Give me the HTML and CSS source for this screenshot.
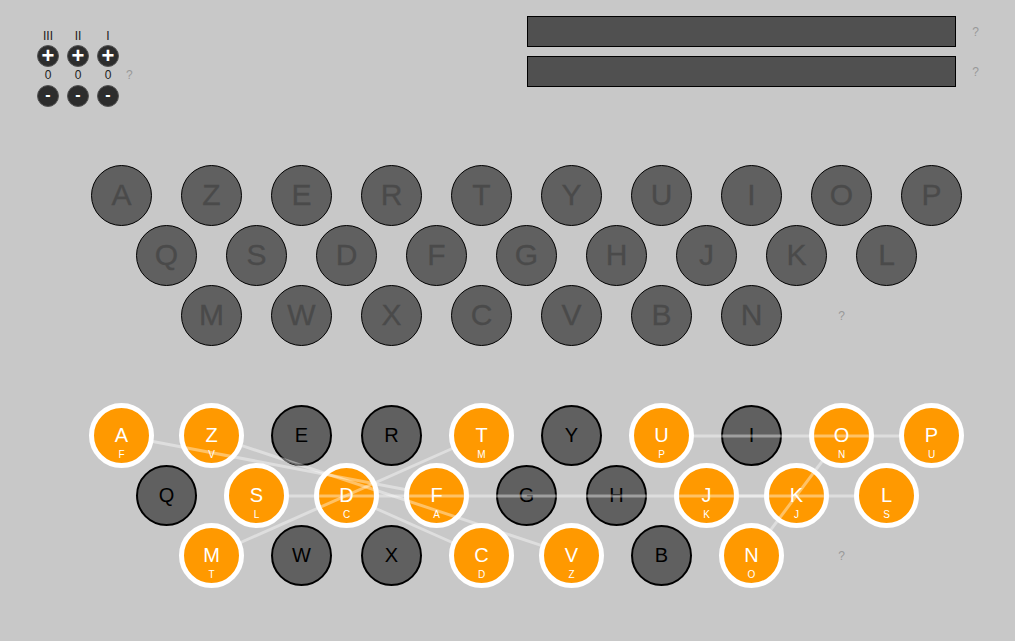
FILE: index.html
```html
<!DOCTYPE html>
<html lang="fr">
<head>
    <meta charset="UTF-8">
    <meta name="viewport" content="width=device-width, initial-scale=1.0">
    <title>Enigma</title>
    <link rel="stylesheet" href="styles.css">
</head>
<body>
    <div class="top">
        <div class="rotors">
            <div class="rotor">
                <span class="rotor-name">III</span>
                <button class="rotor-btn">+</button>
                <span class="rotor-pos">0</span>
                <button class="rotor-btn minus">-</button>
            </div>
            <div class="rotor">
                <span class="rotor-name">II</span>
                <button class="rotor-btn">+</button>
                <span class="rotor-pos">0</span>
                <button class="rotor-btn minus">-</button>
            </div>
            <div class="rotor">
                <span class="rotor-name">I</span>
                <button class="rotor-btn">+</button>
                <span class="rotor-pos">0</span>
                <button class="rotor-btn minus">-</button>
            </div>
            <span class="help rotors-help">?</span>
        </div>
        <div class="displays">
            <div class="display-row"><div class="display"></div><span class="help">?</span></div>
            <div class="display-row"><div class="display"></div><span class="help">?</span></div>
        </div>
    </div>

    <!-- Clavier -->
    <div class="board keyboard">
        <div class="row">
            <div class="key">A</div><div class="key">Z</div><div class="key">E</div><div class="key">R</div><div class="key">T</div><div class="key">Y</div><div class="key">U</div><div class="key">I</div><div class="key">O</div><div class="key">P</div>
        </div>
        <div class="row row-2">
            <div class="key">Q</div><div class="key">S</div><div class="key">D</div><div class="key">F</div><div class="key">G</div><div class="key">H</div><div class="key">J</div><div class="key">K</div><div class="key">L</div>
        </div>
        <div class="row row-3">
            <div class="key">M</div><div class="key">W</div><div class="key">X</div><div class="key">C</div><div class="key">V</div><div class="key">B</div><div class="key">N</div><div class="key-help help">?</div>
        </div>
    </div>

    <!-- Tableau de connexions -->
    <div class="board plugboard">
        <div class="row">
            <div class="key on">A<small>F</small></div><div class="key on">Z<small>V</small></div><div class="key">E</div><div class="key">R</div><div class="key on">T<small>M</small></div><div class="key">Y</div><div class="key on">U<small>P</small></div><div class="key">I</div><div class="key on">O<small>N</small></div><div class="key on">P<small>U</small></div>
        </div>
        <div class="row row-2">
            <div class="key">Q</div><div class="key on">S<small>L</small></div><div class="key on">D<small>C</small></div><div class="key on">F<small>A</small></div><div class="key">G</div><div class="key">H</div><div class="key on">J<small>K</small></div><div class="key on">K<small>J</small></div><div class="key on">L<small>S</small></div>
        </div>
        <div class="row row-3">
            <div class="key on">M<small>T</small></div><div class="key">W</div><div class="key">X</div><div class="key on">C<small>D</small></div><div class="key on">V<small>Z</small></div><div class="key">B</div><div class="key on">N<small>O</small></div><div class="key-help help">?</div>
        </div>
        <!-- fils : coupes au bord des touches reliees -->
        <svg class="wires" width="880" height="190">
            <line x1="61.9" y1="36.5" x2="314.1" y2="84.5"/>
            <line x1="150.9" y1="40.6" x2="450.1" y2="140.4"/>
            <line x1="197.5" y1="91" x2="763.5" y2="91"/>
            <line x1="284.7" y1="103.5" x2="361.3" y2="137.5"/>
            <line x1="361.3" y1="43.5" x2="149.7" y2="137.5"/>
            <line x1="602.5" y1="31" x2="808.5" y2="31"/>
            <line x1="647.5" y1="91" x2="673.5" y2="91"/>
            <line x1="731.3" y1="56.1" x2="679.7" y2="124.9"/>
        </svg>
    </div>
</body>
</html>
```

FILE: styles.css
```css
body {
    margin: 0;
    min-height: 100vh;
    background-color: #c8c8c8;
    font-family: "Liberation Sans", Arial, sans-serif;
}
.top {
    display: flex;
    justify-content: space-between;
    height: 165px;
    padding: 16px 36px 0 37px;
    box-sizing: border-box;
}
.rotors {
    display: flex;
    gap: 8px;
    padding-top: 13px;
    position: relative;
}
.rotor {
    display: flex;
    flex-direction: column;
    align-items: center;
    width: 22px;
    color: #222;
    font-size: 12px;
}
.rotor-name, .rotor-pos {
    height: 15px;
    line-height: 14px;
}
.rotor-pos {
    margin-top: 1px;
}
.rotor-btn {
    width: 22px;
    height: 22px;
    margin-top: 1px;
    padding: 0 0 1px;
    border: 1px solid #555;
    border-radius: 50%;
    background-color: #2d2d2d;
    color: #fff;
    font-family: inherit;
    font-size: 22px;
    font-weight: bold;
    line-height: 18px;
}
.rotor-btn.minus {
    margin-top: 2px;
    padding-bottom: 4px;
    font-size: 16px;
}
.help {
    color: #999;
    font-size: 12px;
}
.rotors-help {
    align-self: flex-start;
    margin: 39px 0 0 -1px;
}
.displays {
    display: flex;
    flex-direction: column;
    gap: 9px;
}
.display-row {
    display: flex;
    align-items: center;
    gap: 16px;
}
.display {
    width: 429px;
    height: 31px;
    box-sizing: border-box;
    border: 1px solid #000;
    background-color: #505050;
}
.board {
    position: relative;
    padding-left: 91px;
}
.plugboard {
    margin-top: 60px;
}
.row {
    display: flex;
    gap: 29px;
    height: 60px;
}
.row-2 {
    margin-left: 45px;
}
.row-3 {
    margin-left: 90px;
}
.key {
    position: relative;
    flex: none;
    width: 61px;
    height: 61px;
    box-sizing: border-box;
    border: 1px solid #000;
    border-radius: 50%;
    background-color: #606060;
    color: #4a4a4a;
    font-size: 30px;
    line-height: 57px;
    text-align: center;
    -webkit-text-stroke: 0.3px #4a4a4a;
}
.key-help {
    width: 61px;
    line-height: 63px;
    text-align: center;
}
.plugboard .key {
    border-width: 2px;
    color: #000;
    font-size: 20px;
    line-height: 56px;
    -webkit-text-stroke: 0;
}
.plugboard .key.on {
    width: 65px;
    height: 65px;
    margin: -2px;
    border: 5px solid #fff;
    background-color: #ff9900;
    color: #fff;
    line-height: 54px;
}
.key small {
    position: absolute;
    left: 0;
    right: 0;
    bottom: 2px;
    font-size: 10px;
    line-height: 12px;
}
.wires {
    position: absolute;
    left: 91px;
    top: 0;
    pointer-events: none;
}
.wires line {
    stroke: #fff;
    stroke-opacity: 0.4;
    stroke-width: 3;
}
```
